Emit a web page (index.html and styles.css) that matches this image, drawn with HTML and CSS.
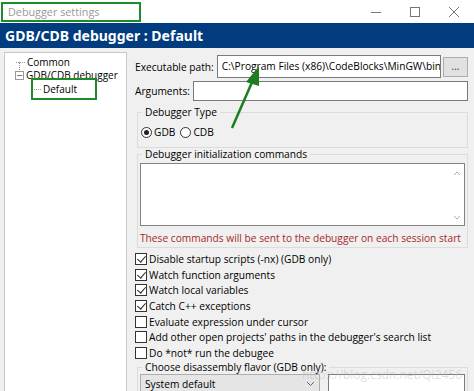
FILE: index.html
```html
<!DOCTYPE html>
<html>
<head>
<meta charset="utf-8">
<link rel="stylesheet" href="styles.css">
</head>
<body>
<div class="window">
  <div class="titlebar">
    <div class="title-box">Debugger settings</div>
    <div class="controls">
      <svg class="ctl" width="12" height="12" viewBox="0 0 12 12"><line x1="1" y1="6.5" x2="11" y2="6.5" stroke="#777" stroke-width="1"/></svg>
      <svg class="ctl" width="12" height="12" viewBox="0 0 12 12"><rect x="1.5" y="1.5" width="9" height="9" fill="none" stroke="#777" stroke-width="1"/></svg>
      <svg class="ctl" width="12" height="12" viewBox="0 0 12 12"><path d="M1 1 L11 11 M11 1 L1 11" stroke="#777" stroke-width="1"/></svg>
    </div>
  </div>
  <div class="header">GDB/CDB debugger : Default</div>
  <div class="main">
    <div class="tree">
      <div class="node n-common"><span class="hline"></span>Common</div>
      <div class="node n-gdb"><span class="expander">−</span>GDB/CDB debugger</div>
      <div class="node n-default"><span class="hline"></span>Default</div>
      <div class="vline"></div>
      <div class="vline2"></div>
      <div class="mark-default"></div>
    </div>
    <div class="content">
      <div class="row row-exe">
        <span class="label">Executable path:</span>
        <div class="input exe">C:\Program Files (x86)\CodeBlocks\MinGW\bin</div>
        <div class="btn">...</div>
      </div>
      <div class="row row-args">
        <span class="label">Arguments:</span>
        <div class="input args"></div>
      </div>
      <fieldset class="group g-type">
        <legend>Debugger Type</legend>
        <div class="radios">
          <span class="radio on"></span><span class="rlabel">GDB</span>
          <span class="radio"></span><span class="rlabel">CDB</span>
        </div>
      </fieldset>
      <fieldset class="group g-init">
        <legend>Debugger initialization commands</legend>
        <div class="textarea">
          <div class="sb">
            <svg width="8" height="6" viewBox="0 0 8 6"><path d="M1 5 L4 2 L7 5" fill="none" stroke="#aaa" stroke-width="1"/></svg>
            <svg width="8" height="6" viewBox="0 0 8 6"><path d="M1 1 L4 4 L7 1" fill="none" stroke="#aaa" stroke-width="1"/></svg>
          </div>
        </div>
        <div class="note">These commands will be sent to the debugger on each session start</div>
      </fieldset>
      <div class="checks">
        <div class="check"><span class="cb on"></span>Disable startup scripts (-nx) (GDB only)</div>
        <div class="check"><span class="cb on"></span>Watch function arguments</div>
        <div class="check"><span class="cb on"></span>Watch local variables</div>
        <div class="check"><span class="cb on"></span>Catch C++ exceptions</div>
        <div class="check"><span class="cb"></span>Evaluate expression under cursor</div>
        <div class="check"><span class="cb"></span>Add other open projects' paths in the debugger's search list</div>
        <div class="check"><span class="cb"></span>Do *not* run the debugee</div>
      </div>
      <fieldset class="group g-dis">
        <legend>Choose disassembly flavor (GDB only):</legend>
        <div class="dis-row">
          <div class="select">System default<svg width="9" height="6" viewBox="0 0 9 6"><path d="M1 1 L4.5 4.5 L8 1" fill="none" stroke="#666" stroke-width="1"/></svg></div>
          <div class="input dis-input"></div>
        </div>
      </fieldset>
      <div class="watermark">https://blog.csdn.net/Qi2456</div>
    </div>
  </div>
  <svg class="arrow" width="474" height="391" viewBox="0 0 474 391">
    <line x1="232" y1="128" x2="253" y2="80" stroke="#1e7d1e" stroke-width="2.5"/>
    <polygon points="259,66 246,82 259,86" fill="#1e7d1e"/>
  </svg>
</div>
</body>
</html>
```

FILE: styles.css
```css
* { box-sizing: border-box; }
html, body { margin: 0; padding: 0; }
body {
  width: 474px;
  height: 391px;
  overflow: hidden;
  background: #f0f0f0;
  font-family: "Open Sans", "Noto Sans", sans-serif;
  font-size: 10.2px;
  color: #000;
}
.window { position: relative; width: 474px; height: 391px; overflow: hidden; }
.titlebar {
  height: 23px;
  background: #fff;
  display: flex;
  align-items: center;
  justify-content: space-between;
}
.title-box {
  margin-left: 1px;
  width: 140px;
  height: 20px;
  border: 2px solid #1f8a2a;
  color: #999;
  font-size: 10.8px;
  line-height: 16px;
  padding-left: 5px;
}
.controls { display: flex; gap: 27px; margin-right: 14px; }
.header {
  height: 25px;
  background: #003c7e;
  color: #fff;
  font-family: "Noto Sans", "Open Sans", sans-serif;
  font-weight: bold;
  font-size: 14px;
  line-height: 25px;
  padding-left: 5px;
}
.main { display: flex; height: 343px; padding-top: 4px; }
.tree {
  position: relative;
  width: 123px;
  flex: none;
  margin-left: 4px;
  height: 345px;
  background: #fff;
  border: 1px solid #c8c8c8;
  padding-top: 3px;
  font-size: 10px;
}
.node { height: 13px; line-height: 13px; display: flex; align-items: center; white-space: nowrap; }
.n-common { padding-left: 11px; }
.n-gdb { padding-left: 10px; }
.n-default { padding-left: 27px; margin-top: 1px; }
.hline { display: inline-block; width: 9px; border-top: 1px dotted #999; margin-right: 2px; }
.expander {
  display: inline-flex; width: 9px; height: 9px; border: 1px solid #999;
  font-size: 8px; line-height: 7px; align-items: center; justify-content: center;
  color: #444; margin-right: 2px; font-family: "DejaVu Sans", sans-serif;
}
.vline { position: absolute; left: 14px; top: 9px; height: 10px; border-left: 1px dotted #999; }
.vline2 { position: absolute; left: 27px; top: 24px; height: 9px; border-left: 1px dotted #999; }
.mark-default {
  position: absolute; left: 26px; top: 25px; width: 66px; height: 22px;
  border: 2px solid #1f8a2a;
}
.content { flex: 1; min-width: 0; padding: 3px 6px 0 8px; position: relative; }
.row { display: flex; align-items: center; }
.row-exe { height: 23px; }
.row-args { height: 20px; margin-top: 3px; }
.label { white-space: nowrap; margin-right: 3px; }
.input {
  background: #fff;
  border: 1px solid #7a7a7a;
  height: 21px;
  line-height: 19px;
  padding-left: 4px;
  white-space: nowrap;
  overflow: hidden;
}
.exe { flex: 1; min-width: 0; height: 23px; line-height: 21px; }
.btn {
  width: 25px; height: 20px; margin-left: 2px; flex: none;
  background: #e1e1e1; border: 1px solid #adadad;
  text-align: center; line-height: 16px; font-size: 10px; color: #333;
}
.args { flex: 1; height: 20px; }
.group {
  margin: 0 0 0 2px;
  border: 1px solid #dcdcdc;
  padding: 0 2px 0 2px;
  min-width: 0;
}
.group legend { padding: 0 3px; margin-left: 2px; line-height: 13px; }
.g-type { margin-top: 5px; height: 42px; }
.radios { display: flex; align-items: center; height: 26px; padding-left: 1px; }
.radio {
  width: 11px; height: 11px; border-radius: 50%; border: 1px solid #333; background: #fff;
  display: inline-flex; align-items: center; justify-content: center;
}
.radio.on::after { content: ""; width: 5px; height: 5px; border-radius: 50%; background: #222; }
.rlabel { margin: 0 5px 0 2px; }
.g-init { margin-top: 0; height: 100px; }
.textarea {
  height: 63px; background: #fff; border: 1px solid #828282; margin-top: 2px;
  display: flex; justify-content: flex-end;
}
.sb { width: 15px; display: flex; flex-direction: column; justify-content: space-between; align-items: center; padding: 6px 0 4px; }
.note { color: #a52a2a; white-space: nowrap; margin-top: 5px; }
.checks { margin-top: 3px; }
.check { height: 15.7px; display: flex; align-items: center; white-space: nowrap; }
.cb {
  width: 12px; height: 12px; border: 1px solid #333; background: #fff; margin-right: 2px; flex: none;
  position: relative;
}
.cb.on::after {
  content: ""; position: absolute; left: 3px; top: 0px; width: 4px; height: 7px;
  border-right: 1.5px solid #222; border-bottom: 1.5px solid #222; transform: rotate(40deg);
}
.g-dis { margin-top: 0; height: 40px; }
.dis-row { display: flex; gap: 8px; margin-top: 0; }
.select {
  width: 180px; height: 20px; background: #e5e5e5; border: 1px solid #adadad;
  display: flex; justify-content: space-between; align-items: center; padding: 0 4px;
}
.dis-input { flex: 1; height: 20px; }
.watermark {
  position: absolute; left: 175px; top: 314px; color: rgba(190,190,190,0.5);
  font-size: 12px; white-space: nowrap;
}
.arrow { position: absolute; left: 0; top: 0; pointer-events: none; }
```
